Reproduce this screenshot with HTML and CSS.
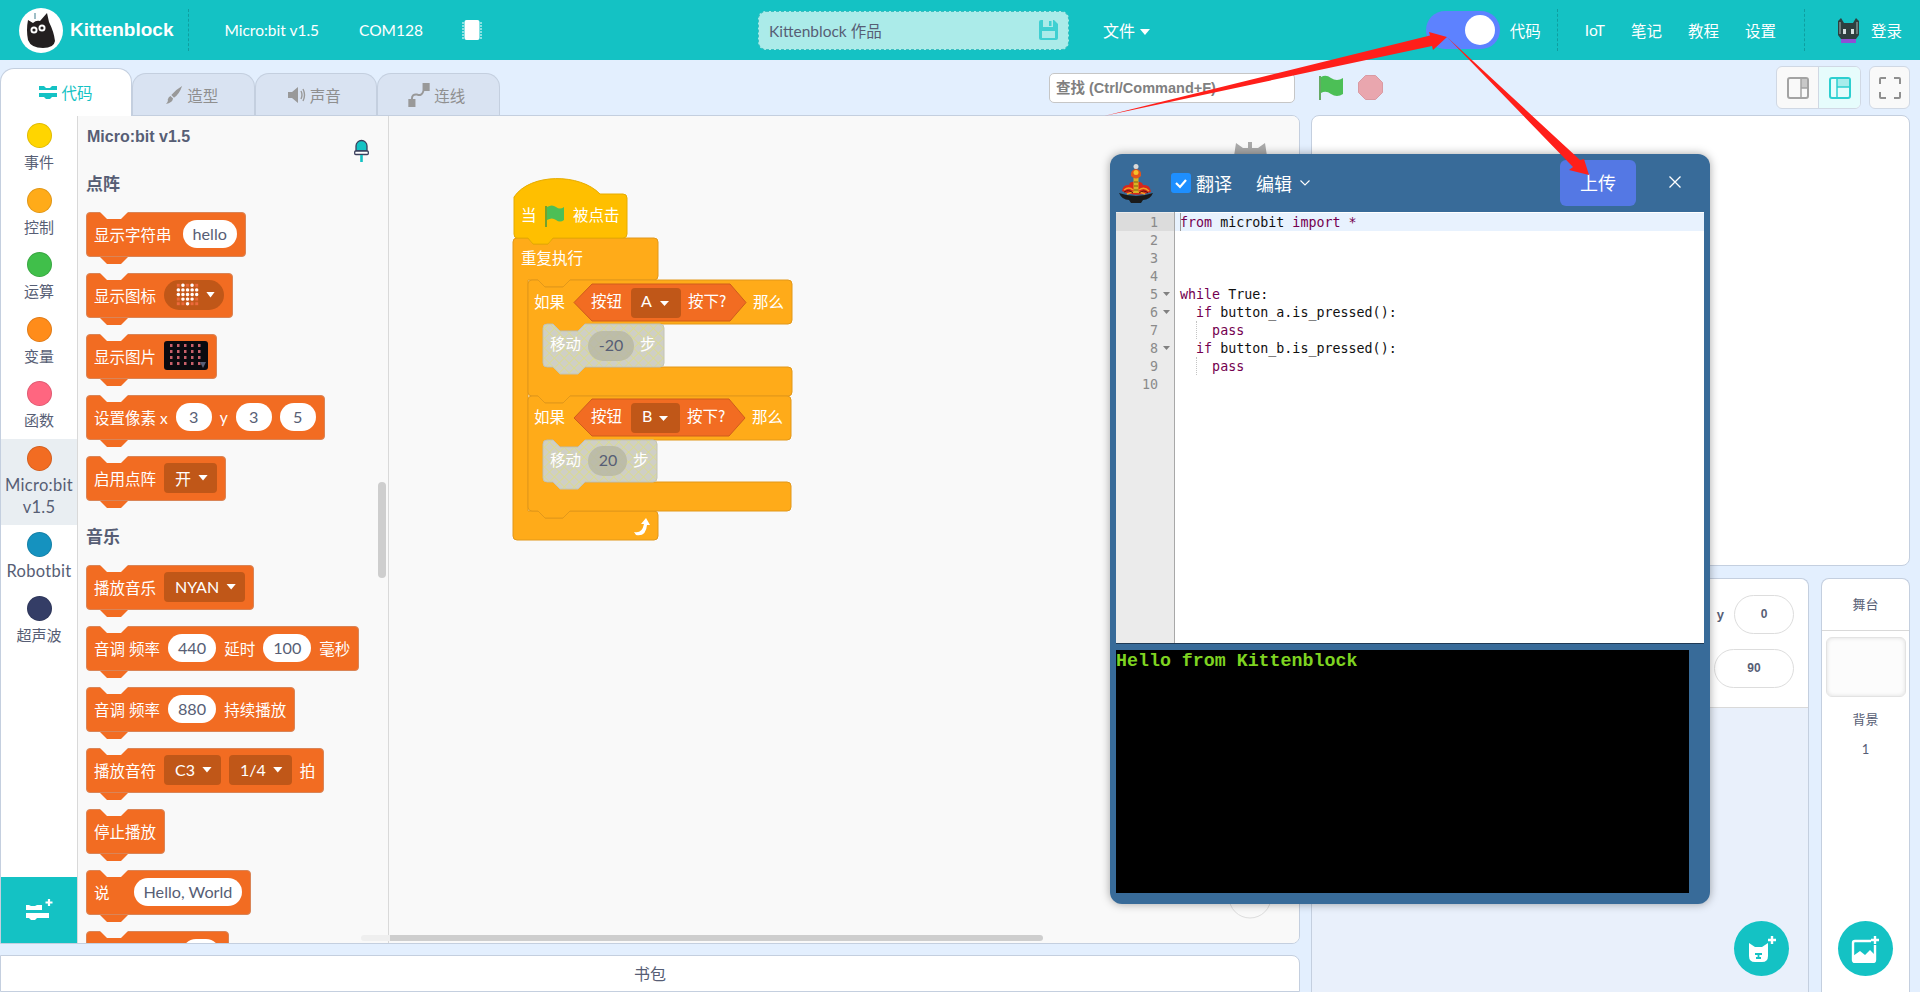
FILE: index.html
```
<!DOCTYPE html>
<html lang="zh-CN">
<head>
    <meta charset="UTF-8">
    <title>Kittenblock</title>
    <link rel="stylesheet" href="styles.css">
</head>
<body>
    <!-- 1. top bar -->
    <div class="topbar">
        <svg class="logo" viewBox="0 0 44 45">
            <ellipse cx="22" cy="22.5" rx="22" ry="22.5" fill="#fff"/>
            <path d="M9 12 L14 15 Q17 12 21 13 L28 5 L30 14 Q35 24 36 33 Q35 40 24 40 Q12 40 9 32 Q7 22 9 12Z" fill="#231f20"/>
            <circle cx="15" cy="22" r="3.5" fill="#fff"/><circle cx="23" cy="20" r="3.5" fill="#fff"/>
            <circle cx="15" cy="22" r="1.6" fill="#231f20"/><circle cx="23" cy="20" r="1.6" fill="#231f20"/>
            <path d="M16 5 V11" stroke="#7fa9b3" stroke-width="1.5"/>
        </svg>
        <span class="brand">Kittenblock</span>
        <span class="vline"></span>
        <span class="top-link device">Micro:bit v1.5</span>
        <span class="top-link com">COM128</span>
        <svg class="chip" viewBox="0 0 20 20">
            <rect x="2.5" y="0" width="15" height="20" rx="2" fill="#fff"/>
            <path d="M0 3H20M0 6H20M0 9H20M0 12H20M0 15H20M0 18H20" stroke="#fff" stroke-width="1.2" stroke-dasharray="2 16"/>
        </svg>
        <div class="project">
            <span>Kittenblock 作品</span>
            <svg class="save" viewBox="0 0 19 20">
                <path d="M2 0H15L19 4V18Q19 20 17 20H2Q0 20 0 18V2Q0 0 2 0Z" fill="#3fd0d2"/>
                <rect x="3" y="11" width="13" height="7" fill="#abebe9"/>
                <rect x="4" y="0" width="10" height="7" fill="#abebe9"/>
                <rect x="10" y="1" width="2.500" height="5" fill="#3fd0d2"/>
            </svg>
        </div>
        <span class="top-link file">文件<i class="caret"></i></span>
        <div class="top-right">
            <div class="switch"><span class="knob"></span></div>
            <span class="top-link code-label">代码</span>
            <span class="vline"></span>
            <span class="top-link iot">IoT</span>
            <span class="top-link">笔记</span>
            <span class="top-link">教程</span>
            <span class="top-link">设置</span>
            <span class="vline"></span>
            <svg class="user-cat" viewBox="0 0 23 25">
                <path d="M1 3 L4 0 L7 5 H16 L19 0 L22 3 V17 L19 21 H4 L1 17Z" fill="#2e3f3f"/>
                <path d="M3 4V16M20 4V16" stroke="#7d8f8f" stroke-width="1.500"/>
                <rect x="6" y="11" width="3" height="5" fill="#d5e0e0"/><rect x="14" y="11" width="3" height="5" fill="#d5e0e0"/>
                <rect x="4" y="21" width="15" height="4" fill="#8e4fd6"/>
            </svg>
            <span class="top-link">登录</span>
        </div>
    </div>

    <div class="main">
        <div class="left-col">
            <!-- 2. tabs and search -->
            <div class="tab-row">
                <div class="tab active">
                    <svg class="tab-icon" viewBox="0 0 18 14"><path d="M0 1H5L7 3H11L13 1H18V5H0ZM0 8H18V12H13L11 14H7L5 12H0Z" fill="#14c2c4"/></svg>
                    代码
                </div>
                <div class="tab">
                    <svg class="tab-icon" viewBox="0 0 18 20"><path d="M18 0 Q15 9 9 13 L6 10 Q11 4 18 0ZM5 11 L8 14 Q7 19 0 20 Q3 17 2 15 Q3 12 5 11Z" fill="#999"/></svg>
                    造型
                </div>
                <div class="tab">
                    <svg class="tab-icon" viewBox="0 0 18 16"><path d="M0 5H4L10 0V16L4 11H0Z" fill="#999"/><path d="M13 4 Q15 8 13 12M15 2 Q18 8 15 14" stroke="#999" fill="none" stroke-width="1.400"/></svg>
                    声音
                </div>
                <div class="tab">
                    <svg class="tab-icon wide" viewBox="0 0 24 27"><rect x="0" y="18" width="8" height="9" fill="#999"/><rect x="16" y="0" width="8" height="9" fill="#999"/><path d="M4 18 Q4 12 10 13 Q15 15 17 9" stroke="#999" stroke-width="2.200" fill="none"/></svg>
                    连线
                </div>
                <div class="search">查找 (Ctrl/Command+F)</div>
            </div>

            <!-- 3. block editor -->
            <div class="editor">
                <div class="cats">
                    <div class="cat"><span class="dot dot-event"></span><span class="cat-name">事件</span></div>
                    <div class="cat"><span class="dot dot-control"></span><span class="cat-name">控制</span></div>
                    <div class="cat"><span class="dot dot-operator"></span><span class="cat-name">运算</span></div>
                    <div class="cat"><span class="dot dot-variable"></span><span class="cat-name">变量</span></div>
                    <div class="cat"><span class="dot dot-function"></span><span class="cat-name">函数</span></div>
                    <div class="cat selected"><span class="dot dot-microbit"></span><span class="cat-name latin-name">Micro:bit v1.5</span></div>
                    <div class="cat"><span class="dot dot-robotbit"></span><span class="cat-name latin-name">Robotbit</span></div>
                    <div class="cat"><span class="dot dot-sonar"></span><span class="cat-name">超声波</span></div>
                    <div class="ext-button">
                        <svg viewBox="0 0 27 22" class="ext-icon"><path d="M0 6H3L5 7H9L11 6H16V11H0ZM0 14H23V19H11L9 21H5L3 19H0Z" fill="#fff"/><path d="M23 0V7M19.500 3.500H26.500" stroke="#fff" stroke-width="2.200"/></svg>
                    </div>
                </div>

                <div class="flyout">
                    <div class="fly-title">Micro:bit v1.5</div>
                    <svg class="led" viewBox="0 0 15 23">
                        <path d="M2 12V7A5.500 5.500 0 0 1 13 7V12Z" fill="#14c2c4" stroke="#3a3f5c" stroke-width="1.300"/>
                        <rect x="0.700" y="12" width="13.600" height="3.500" rx="1" fill="#fff" stroke="#3a3f5c" stroke-width="1.300"/>
                        <rect x="6.200" y="16" width="2.600" height="7" fill="#14c2c4"/>
                    </svg>
                    <div class="fly-head first">点阵</div>
                    <div class="block"><span class="b-text">显示字符串</span><span class="pill wide-gap">hello</span></div>
                    <div class="block">
                        <span class="b-text">显示图标</span>
                        <span class="matrix-drop">
                            <svg class="heart" viewBox="0 0 23 23">
                                <defs><pattern id="offdots" width="4.600" height="4.600" patternUnits="userSpaceOnUse"><rect x="0.800" y="0.800" width="3" height="3" fill="#ee6a3c"/></pattern></defs>
                                <rect width="23" height="23" fill="url(#offdots)"/>
                                <path d="M6.900 2.300H7M16 2.300H16.100M2.300 6.900H20.700M2.300 11.500H20.700M6.900 16.100H16.100M11.500 20.700H11.600" stroke="#fff" stroke-width="3.400" stroke-dasharray="0.100 4.500" stroke-linecap="round"/>
                            </svg>
                            <i class="caret"></i>
                        </span>
                    </div>
                    <div class="block">
                        <span class="b-text">显示图片</span>
                        <svg class="image-field" viewBox="0 0 44 29">
                            <defs><pattern id="reddots" x="6" y="3" width="7" height="6" patternUnits="userSpaceOnUse"><rect x="0" y="0" width="2.500" height="3" fill="#c8606a"/></pattern></defs>
                            <rect width="44" height="29" rx="3" fill="#0a0a0f"/>
                            <rect x="6" y="3" width="32" height="24" fill="url(#reddots)"/>
                            <path d="M36 21H42L39 27Z" fill="#575e75"/>
                        </svg>
                    </div>
                    <div class="block">
                        <span class="b-text">设置像素 x</span>
                        <span class="pill">3</span><span class="b-text">y</span><span class="pill">3</span><span class="pill">5</span>
                    </div>
                    <div class="block"><span class="b-text">启用点阵</span><span class="drop">开<i class="caret"></i></span></div>
                    <div class="fly-head">音乐</div>
                    <div class="block"><span class="b-text">播放音乐</span><span class="drop">NYAN<i class="caret"></i></span></div>
                    <div class="block"><span class="b-text">音调 频率</span><span class="pill">440</span><span class="b-text">延时</span><span class="pill">100</span><span class="b-text">毫秒</span></div>
                    <div class="block"><span class="b-text">音调 频率</span><span class="pill">880</span><span class="b-text">持续播放</span></div>
                    <div class="block"><span class="b-text">播放音符</span><span class="drop">C3<i class="caret"></i></span><span class="drop">1/4<i class="caret"></i></span><span class="b-text">拍</span></div>
                    <div class="block"><span class="b-text">停止播放</span></div>
                    <div class="block"><span class="b-text say">说</span><span class="pill">Hello, World</span></div>
                    <!-- next block, only its top edge is still in view -->
                    <div class="block"><span class="b-spacer"></span><span class="pill empty"></span></div>
                    <span class="fly-scroll"></span>
                </div>

                <div class="workspace">
                    <svg class="script" viewBox="389 115 911 829">
                        <defs>
                            <pattern id="hatch" width="7" height="7" patternUnits="userSpaceOnUse" patternTransform="rotate(45)">
                                <rect width="7" height="7" fill="#cfcfc6"/>
                                <path d="M0 0H7M0 0V7" stroke="#dcdc88" stroke-width="1.600"/>
                            </pattern>
                        </defs>
                        <!-- backdrop controls that sit behind the code window -->
                        <path class="ws-cat" d="M1234 155 L1236 142 L1243 147 H1248V141H1252V147H1258 L1265 142 L1267 155 Z"/>
                        <circle class="ws-zoom" cx="1250" cy="896" r="21"/>

                        <path class="c-shape" d="M517 237H528L533 243H548L553 237H654Q658 237 658 241V275Q658 279 654 279H570L563 286H545L538 279H528V510H538L545 517H563L570 510H654Q658 510 658 514V535Q658 539 654 539H517Q513 539 513 535V241Q513 237 517 237Z"/>
                        <path class="c-shape" d="M532 279H538L545 286H563L570 279H788Q792 279 792 283V319Q792 323 788 323H585L578 330H560L553 323H547Q543 323 543 327V362Q543 366 547 366H788Q792 366 792 370V391Q792 395 788 395H570L563 402H545L538 395H532Q528 395 528 391V283Q528 279 532 279Z"/>
                        <path class="c-shape" d="M532 395H538L545 402H563L570 395H787Q791 395 791 399V435Q791 439 787 439H585L578 446H560L553 439H547Q543 439 543 443V477Q543 481 547 481H787Q791 481 791 485V506Q791 510 787 510H570L563 517H545L538 510H532Q528 510 528 506V399Q528 395 532 395Z"/>
                        <path class="hat" d="M514 196C530 172 580 172 600 193H623Q627 193 627 197V233Q627 237 623 237H553L548 243H533L528 237H517Q514 237 514 233Z"/>

                        <text class="bt" x="521" y="220">当</text>
                        <path d="M546 205V226" stroke="#45993d" stroke-width="1.500"/>
                        <path d="M547 206Q552 203 556 206Q560 209 564 206V219Q560 222 556 219Q552 216 547 219Z" fill="#4cbf56"/>
                        <text class="bt" x="573" y="220">被点击</text>
                        <text class="bt" x="521" y="263">重复执行</text>

                        <text class="bt" x="534" y="307">如果</text>
                        <polygon class="hex" points="574,301.500 592,283 730,283 746,301.500 730,320 592,320"/>
                        <text class="bt" x="591" y="306">按钮</text>
                        <rect class="dd" x="631" y="287" width="50" height="30" rx="4"/>
                        <text class="bt latin" x="641" y="306">A</text>
                        <path class="cr" d="M660 300H669L664.500 305Z"/>
                        <text class="bt" x="688" y="306">按下?</text>
                        <text class="bt" x="753" y="307">那么</text>

                        <path class="ghost" d="M547 323H553L560 330H578L585 323H660Q664 323 664 327V362Q664 366 660 366H585L578 373H560L553 366H547Q543 366 543 362V327Q543 323 547 323Z"/>
                        <text class="bt" x="550" y="349">移动</text>
                        <rect class="ghost-oval" x="588" y="330" width="46" height="30" rx="15"/>
                        <text class="bt num" x="611" y="350">-20</text>
                        <text class="bt" x="640" y="349">步</text>

                        <text class="bt" x="534" y="422">如果</text>
                        <polygon class="hex" points="574,417 592,398 729,398 745,417 729,435 592,435"/>
                        <text class="bt" x="591" y="421">按钮</text>
                        <rect class="dd" x="631" y="402" width="49" height="30" rx="4"/>
                        <text class="bt latin" x="642" y="421">B</text>
                        <path class="cr" d="M659 415H668L663.500 420Z"/>
                        <text class="bt" x="687" y="421">按下?</text>
                        <text class="bt" x="752" y="422">那么</text>

                        <path class="ghost" d="M547 439H553L560 446H578L585 439H653Q657 439 657 443V477Q657 481 653 481H585L578 488H560L553 481H547Q543 481 543 477V443Q543 439 547 439Z"/>
                        <text class="bt" x="550" y="465">移动</text>
                        <rect class="ghost-oval" x="588" y="445" width="39" height="30" rx="15"/>
                        <text class="bt num" x="608" y="465">20</text>
                        <text class="bt" x="633" y="465">步</text>

                        <path d="M634 531Q642 533 644 523H641L646 517L650 524H647Q646 536 636 534Z" fill="#fff"/>
                    </svg>
                    <span class="ws-scroll"></span>
                </div>
            </div>

            <div class="backpack">书包</div>
        </div>

        <div class="right-col">
            <!-- 4. stage controls -->
            <div class="stage-tools">
                <svg class="flag" viewBox="0 0 25 25">
                    <path d="M1 1V25" stroke="#45993d" stroke-width="1.600"/>
                    <path d="M2 2Q7 -1 12 3Q18 7 24 3V19Q18 23 12 19Q7 15 2 18Z" fill="#4cbf56"/>
                </svg>
                <svg class="stop" viewBox="0 0 25 25">
                    <polygon points="7.500,0.500 17.500,0.500 24.500,7.500 24.500,17.500 17.500,24.500 7.500,24.500 0.500,17.500 0.500,7.500" fill="#e9a6ae" stroke="#d99aa3"/>
                </svg>
                <div class="view-group">
                    <span class="view-btn">
                        <svg class="view-icon" viewBox="0 0 22 22"><rect x="1" y="1" width="20" height="20" rx="2" fill="none" stroke="#a3a3a3" stroke-width="2"/><rect x="14" y="2" width="6" height="9" fill="#c8c8c8"/><path d="M14 1V21M14 11H21" stroke="#a3a3a3" stroke-width="1.500"/></svg>
                    </span>
                    <span class="view-btn on">
                        <svg class="view-icon" viewBox="0 0 22 22"><rect x="1" y="1" width="20" height="20" rx="2" fill="none" stroke="#2ccfd0" stroke-width="2"/><rect x="8" y="2" width="12" height="8" fill="#a8eceb"/><path d="M8 1V21M8 10H21" stroke="#2ccfd0" stroke-width="1.500"/></svg>
                    </span>
                </div>
                <span class="full-btn">
                    <svg class="view-icon" viewBox="0 0 22 22"><path d="M1 7V2Q1 1 2 1H7M15 1H20Q21 1 21 2V7M21 15V20Q21 21 20 21H15M7 21H2Q1 21 1 20V15" fill="none" stroke="#8f8f8f" stroke-width="2"/></svg>
                </span>
            </div>
            <div class="stage"></div>
            <div class="panes">
                <div class="sprite-pane">
                    <div class="sprite-info">
                        <div class="field-row"><span class="field-label">y</span><span class="field small">0</span></div>
                        <div class="field-row"><span class="field">90</span></div>
                    </div>
                    <span class="fab">
                        <svg class="fab-icon" viewBox="0 0 30 28"><path d="M2 8L8 12H15L21 8V21Q21 27 15 27H8Q2 27 2 21Z" fill="#fff"/><path d="M8 19H15M11.500 19V22M9 23H14" stroke="#14c2c4" stroke-width="1.800"/><path d="M25 1V9M21 5H29" stroke="#fff" stroke-width="2.400"/></svg>
                    </span>
                </div>
                <div class="stage-pane">
                    <div class="stage-title">舞台</div>
                    <div class="thumb"></div>
                    <div class="bg-label">背景</div>
                    <div class="bg-count">1</div>
                    <span class="fab">
                        <svg class="fab-icon" viewBox="0 0 30 28"><path d="M4 6H20M24 10V25Q24 27 22 27H4Q2 27 2 25V8Q2 6 4 6" fill="none" stroke="#fff" stroke-width="2.400"/><path d="M2 21L9 16L14 20L19 15L24 20V27H2Z" fill="#fff"/><path d="M24 1V9M20 5H28" stroke="#fff" stroke-width="2.400"/></svg>
                    </span>
                </div>
            </div>
        </div>
    </div>

    <!-- 5. code window -->
    <div class="code-window">
        <div class="cw-head">
            <svg class="py-logo" viewBox="0 0 36 40">
                <path d="M1 30Q18 36 35 30Q32 37 25 37L23 40H13L11 37Q4 37 1 30Z" fill="#1a1a1a"/>
                <path d="M4 28Q5 21 11 22Q12 18 17 19Q24 18 25 22Q32 21 33 29Q18 35 4 28Z" fill="#d8281c"/>
                <path d="M6 27Q11 23 15 27M21 27Q26 23 31 28M9 31Q18 27 27 31" stroke="#f0a020" stroke-width="1.500" fill="none"/>
                <path d="M6 29Q11 26 15 30M21 30Q26 26 30 30" stroke="#5a1408" stroke-width="1" fill="none"/>
                <path d="M15.500 30V15H20.500V30Z" fill="#d9b324"/>
                <path d="M16 19H20M16 23H20M16 27H20" stroke="#7a6010" stroke-width="1"/>
                <path d="M13 13Q12 7 18 6Q24 7 23 13Q18 18 13 13Z" fill="#e2541c"/>
                <circle cx="18" cy="9.500" r="2.500" fill="#f6c02c"/>
                <circle cx="18" cy="3.500" r="2.500" fill="#d9d9d9"/>
            </svg>
            <span class="check"><svg viewBox="0 0 20 20"><path d="M5 10L9 14L15 7" stroke="#fff" stroke-width="2.200" fill="none"/></svg></span>
            <span class="cw-label">翻译</span>
            <span class="cw-label edit">编辑</span>
            <svg class="chevron" viewBox="0 0 10 6"><path d="M0.500 0.500L5 5L9.500 0.500" stroke="#fff" fill="none" stroke-width="1.100"/></svg>
            <span class="upload">上传</span>
            <svg class="close" viewBox="0 0 12 12"><path d="M0.500 0.500L11.500 11.500M11.500 0.500L0.500 11.500" stroke="#fff" stroke-width="1.300"/></svg>
        </div>
        <div class="code-pane">
            <div class="gutter">
                <div class="ln current">1</div>
                <div class="ln">2</div>
                <div class="ln">3</div>
                <div class="ln">4</div>
                <div class="ln fold">5</div>
                <div class="ln fold">6</div>
                <div class="ln">7</div>
                <div class="ln fold">8</div>
                <div class="ln">9</div>
                <div class="ln">10</div>
            </div>
            <div class="code">
                <div class="cl current"><b>from</b> microbit <b>import</b> <b>*</b></div>
                <div class="cl"></div>
                <div class="cl"></div>
                <div class="cl"></div>
                <div class="cl"><b>while</b> True:</div>
                <div class="cl">  <b>if</b> button_a.is_pressed():</div>
                <div class="cl guide">    <b>pass</b></div>
                <div class="cl">  <b>if</b> button_b.is_pressed():</div>
                <div class="cl guide">    <b>pass</b></div>
                <div class="cl"></div>
            </div>
        </div>
        <div class="terminal">Hello from Kittenblock</div>
    </div>

    <!-- red arrows drawn over the screenshot -->
    <svg class="arrows" viewBox="0 0 1920 992">
        <polygon points="1104,116 1430,35.500 1429,32 1447,37 1433,50 1432,46"/>
        <polygon points="1447,37 1580,160 1584,159 1589,175 1569,170 1573,167"/>
    </svg>
</body>
</html>
```

FILE: styles.css
```
* {
    box-sizing: border-box;
}
body {
    margin: 0;
    width: 1920px;
    height: 992px;
    overflow: hidden;
    position: relative;
    background-color: #e3effe;
    color: #575e75;
    font-family: "Lato", "Noto Sans CJK SC", sans-serif;
    font-size: 15px;
}

/* top bar */
.topbar {
    height: 60px;
    background-color: #14c2c4;
    color: #fff;
    display: flex;
    align-items: center;
    padding-left: 19px;
}
.logo {
    width: 44px;
    height: 45px;
}
.brand {
    margin-left: 7px;
    font-family: "Liberation Sans", sans-serif;
    font-size: 19px;
    font-weight: bold;
}
.vline {
    width: 0;
    height: 42px;
    border-left: 1px dashed #0f9ea0;
    margin-left: 15px;
}
.top-link {
    color: #fff;
    font-size: 15.500px;
    white-space: nowrap;
}
.device {
    margin-left: 35px;
}
.com {
    margin-left: 40px;
}
.chip {
    margin-left: 39px;
    width: 20px;
    height: 20px;
}
.project {
    margin-left: 276px;
    width: 311px;
    height: 39px;
    background-color: #abebe9;
    border: 1px dashed #3cbfc0;
    border-radius: 8px;
    display: flex;
    align-items: center;
    justify-content: space-between;
    padding: 0 10px;
    color: #575e75;
    font-size: 15.500px;
}
.save {
    width: 19px;
    height: 20px;
}
.file {
    margin-left: 34px;
    font-size: 16px;
}
.caret {
    display: inline-block;
    width: 10px;
    height: 6px;
    margin-left: 5px;
    vertical-align: 2px;
    background-color: #fff;
    clip-path: polygon(0 0, 100% 0, 50% 100%);
}
.top-right {
    margin-left: auto;
    padding-right: 18px;
    display: flex;
    align-items: center;
}
.switch {
    width: 74px;
    height: 38px;
    border-radius: 19px;
    background-color: #5d82ff;
    display: flex;
    align-items: center;
    justify-content: flex-end;
    padding-right: 5px;
}
.knob {
    width: 30px;
    height: 30px;
    border-radius: 50%;
    background-color: #fff;
}
.code-label {
    margin-left: 10px;
}
.top-right .top-link + .top-link {
    margin-left: 26px;
}
.top-right .top-link + .vline {
    margin-left: 28px;
}
.top-right .code-label + .vline {
    margin-left: 16px;
}
.iot {
    margin-left: 27px;
}
.user-cat {
    width: 23px;
    height: 25px;
    margin-left: 32px;
    margin-right: 11px;
}

/* columns */
.main {
    display: flex;
    height: 932px;
}
.left-col {
    width: 1300px;
    display: flex;
    flex-direction: column;
}
.right-col {
    margin-left: 11px;
    width: 599px;
    display: flex;
    flex-direction: column;
}

/* tabs */
.tab-row {
    height: 55px;
    display: flex;
    align-items: flex-end;
}
.tab {
    width: 122.500px;
    height: 43px;
    margin-bottom: -1px;
    background-color: #d9e3f2;
    border: 1px solid #c4cfdf;
    border-bottom: none;
    border-radius: 14px 14px 0 0;
    display: flex;
    align-items: center;
    justify-content: center;
    gap: 4px;
    padding-right: 3px;
    color: #8f8f8f;
    font-size: 15.500px;
}
.tab.active {
    width: 132px;
    height: 48px;
    padding-right: 0;
    padding-bottom: 2px;
    background-color: #fff;
    color: #14c2c4;
    position: relative;
    z-index: 2;
}
.tab-icon {
    width: 18px;
    height: 18px;
}
.tab-icon.wide {
    width: 22px;
    height: 24px;
}
.search {
    margin: 0 5px 12px auto;
    width: 246px;
    height: 30px;
    background-color: #fff;
    border: 1px solid #c6c6c6;
    border-radius: 5px;
    padding-left: 6px;
    line-height: 28px;
    font-family: "Liberation Sans", "Noto Sans CJK SC", sans-serif;
    font-size: 14.500px;
    font-weight: bold;
    color: #808080;
}

/* block editor */
.editor {
    height: 829px;
    display: flex;
    border: 1px solid #c4cfdf;
    border-radius: 0 8px 8px 0;
    overflow: hidden;
    background-color: #f9f9f9;
}
.cats {
    width: 76px;
    background-color: #fff;
    display: flex;
    flex-direction: column;
    flex-shrink: 0;
}
.cat {
    padding: 7px 0;
    display: flex;
    flex-direction: column;
    align-items: center;
    min-height: 64.500px;
}
.cat.selected {
    background-color: #e9eef2;
}
.dot {
    width: 25px;
    height: 25px;
    border-radius: 50%;
    border: 1px solid rgba(0, 0, 0, 0.12);
    flex-shrink: 0;
}
.dot-event { background-color: #ffd500; }
.dot-control { background-color: #ffab19; }
.dot-operator { background-color: #40bf4a; }
.dot-variable { background-color: #ff8c1a; }
.dot-function { background-color: #ff6680; }
.dot-microbit { background-color: #f26c22; }
.dot-robotbit { background-color: #1592bf; }
.dot-sonar { background-color: #343d66; }
.cat-name {
    margin-top: 3px;
    font-size: 15px;
    line-height: 22px;
    text-align: center;
    width: 74px;
}
.latin-name {
    font-size: 16.500px;
    letter-spacing: 0.300px;
}
.ext-button {
    margin-top: auto;
    height: 66px;
    width: 77px;
    background-color: #14c2c4;
    display: flex;
    align-items: center;
    justify-content: center;
}
.ext-icon {
    width: 27px;
    height: 22px;
}

/* flyout */
.flyout {
    width: 312px;
    flex-shrink: 0;
    border-left: 1px solid #d9d9d9;
    border-right: 1px solid #d9d9d9;
    background-color: #f9f9f9;
    padding: 11px 0 0 8px;
    position: relative;
    overflow: hidden;
}
.fly-title {
    font-family: "Liberation Sans", sans-serif;
    font-size: 16px;
    font-weight: bold;
    line-height: 20px;
    margin-left: 1px;
}
.led {
    position: absolute;
    left: 276px;
    top: 23px;
    width: 15px;
    height: 23px;
}
.fly-head {
    font-family: "Noto Sans CJK SC", sans-serif;
    font-size: 17px;
    font-weight: bold;
    line-height: 22px;
    margin: 24px 0 18px;
}
.fly-head.first {
    margin: 25px 0 18px;
}
.block {
    display: flex;
    align-items: center;
    gap: 8px;
    width: fit-content;
    height: 45px;
    margin-bottom: 16px;
    padding: 0 8px 2px 7px;
    position: relative;
    background-color: #f26c22;
    border: 1px solid #d98558;
    border-radius: 4px;
    color: #fff;
    font-size: 15.500px;
}
.block::before {
    content: "";
    position: absolute;
    left: 13px;
    top: -1px;
    width: 28px;
    height: 7px;
    background-color: #f9f9f9;
    clip-path: polygon(0 0, 100% 0, 75% 100%, 25% 100%);
}
.block::after {
    content: "";
    position: absolute;
    left: 13px;
    bottom: -8px;
    width: 28px;
    height: 7px;
    background-color: #f26c22;
    clip-path: polygon(0 0, 100% 0, 75% 100%, 25% 100%);
}
.b-text {
    white-space: nowrap;
}
.b-spacer {
    width: 80px;
}
.say {
    margin-right: 16px;
}
.pill {
    min-width: 36px;
    height: 28px;
    border-radius: 14px;
    padding: 0 10px;
    background-color: #fff;
    color: #575e75;
    font-size: 16.200px;
    text-align: center;
    line-height: 28px;
    white-space: nowrap;
}
.pill.empty {
    width: 38px;
}
.wide-gap {
    margin-left: 3px;
}
.drop {
    height: 30px;
    padding: 0 9px 0 11px;
    background-color: #c05718;
    border-radius: 4px;
    display: flex;
    align-items: center;
    font-size: 16px;
    white-space: nowrap;
}
.drop .caret {
    margin-left: 7px;
    vertical-align: 0;
}
.matrix-drop {
    width: 60px;
    height: 30px;
    border-radius: 15px;
    background-color: #c05718;
    display: flex;
    align-items: center;
    padding-left: 12px;
}
.matrix-drop .caret {
    margin-left: 7px;
    width: 9px;
    vertical-align: 0;
}
.heart {
    width: 23px;
    height: 23px;
}
.image-field {
    width: 44px;
    height: 29px;
}
.fly-scroll {
    position: absolute;
    right: 2px;
    top: 366px;
    width: 8px;
    height: 96px;
    border-radius: 4px;
    background-color: #cecece;
}

/* workspace */
.workspace {
    flex-grow: 1;
    position: relative;
    background-color: #f9f9f9;
}
.script {
    position: absolute;
    left: 0;
    top: 0;
    width: 911px;
    height: 829px;
}
.ws-cat { fill: #aaa; }
.ws-zoom { fill: #f9f9f9; stroke: #ddd; }
.c-shape { fill: #ffab19; stroke: #e2981a; }
.hat { fill: #ffbf00; stroke: #e6ac00; }
.hex { fill: #f26c22; stroke: #cf5c1c; }
.dd { fill: #c05718; }
.cr { fill: #fff; }
.ghost { fill: url(#hatch); stroke: #c4c4b4; }
.ghost-oval { fill: #b6b6a2; fill-opacity: 0.8; }
.bt {
    fill: #fff;
    font-size: 15.500px;
    font-family: "Noto Sans CJK SC", sans-serif;
}
.bt.latin {
    font-family: "Lato", sans-serif;
    font-size: 16px;
}
.bt.num {
    fill: #575e75;
    font-family: "Lato", sans-serif;
    font-size: 16px;
    text-anchor: middle;
}
.ws-scroll {
    position: absolute;
    left: -28px;
    bottom: 2px;
    width: 682px;
    height: 6px;
    border-radius: 3px;
    background: linear-gradient(to right, #efefef 29px, #cecece 29px);
}

.backpack {
    margin-top: 11px;
    height: 37px;
    background-color: #fff;
    border: 1px solid #c4cfdf;
    border-radius: 0 8px 0 0;
    text-align: center;
    line-height: 35px;
    font-size: 16px;
}

/* stage */
.stage-tools {
    height: 55px;
    display: flex;
    align-items: flex-start;
    padding-left: 8px;
    position: relative;
}
.flag {
    width: 25px;
    height: 25px;
    margin-top: 15px;
}
.stop {
    width: 25px;
    height: 25px;
    margin-top: 15px;
    margin-left: 14px;
}
.view-group {
    margin-left: auto;
    margin-top: 6px;
    display: flex;
    width: 85px;
    height: 43px;
    border: 1px solid #d0d8e4;
    border-radius: 6px;
    overflow: hidden;
    background-color: #f9f9f9;
}
.view-btn {
    flex: 1;
    display: flex;
    align-items: center;
    justify-content: center;
}
.view-btn.on {
    background-color: #e6fcfc;
    border-left: 1px solid #d0d8e4;
}
.full-btn {
    margin-top: 6px;
    margin-left: 8px;
    width: 41px;
    height: 43px;
    border: 1px solid #d0d8e4;
    border-radius: 6px;
    background-color: #f9f9f9;
    display: flex;
    align-items: center;
    justify-content: center;
}
.view-icon {
    width: 22px;
    height: 22px;
}
.stage {
    height: 451px;
    background-color: #fff;
    border: 1px solid #c4cfdf;
    border-radius: 8px;
}
.panes {
    margin-top: 12px;
    height: 414px;
    display: flex;
    gap: 12px;
}
.sprite-pane {
    width: 498px;
    position: relative;
    background-color: #e9f0fb;
    border: 1px solid #c4cfdf;
    border-bottom: none;
    border-radius: 8px 8px 0 0;
}
.sprite-info {
    height: 129px;
    background-color: #fff;
    border-bottom: 1px solid #d9d9d9;
    border-radius: 8px 8px 0 0;
    padding: 16px 14px 0 0;
    display: flex;
    flex-direction: column;
    align-items: flex-end;
    gap: 15px;
}
.field-row {
    display: flex;
    align-items: center;
    gap: 10px;
}
.field-label,
.field {
    font-family: "Liberation Sans", sans-serif;
    font-size: 12px;
    font-weight: bold;
}
.field-label {
    font-size: 13px;
}
.field {
    width: 80px;
    height: 39px;
    border: 1px solid #dddddd;
    border-radius: 20px;
    text-align: center;
    line-height: 37px;
}
.field.small {
    width: 60px;
}
.stage-pane {
    width: 89px;
    position: relative;
    background-color: #fff;
    border: 1px solid #c4cfdf;
    border-bottom: none;
    border-radius: 8px 8px 0 0;
    text-align: center;
    font-size: 13px;
}
.stage-title {
    height: 52px;
    line-height: 50px;
    border-bottom: 1px solid #d9d9d9;
}
.thumb {
    margin: 6px auto 0;
    width: 80px;
    height: 60px;
    background-color: #fcfcfc;
    border: 1px solid #e3e3e3;
    border-radius: 6px;
    box-shadow: inset 0 0 4px rgba(0, 0, 0, 0.12);
}
.bg-label {
    margin-top: 12px;
    line-height: 20px;
}
.bg-count {
    margin-top: 10px;
    line-height: 20px;
}
.fab {
    position: absolute;
    bottom: 16px;
    width: 55px;
    height: 55px;
    border-radius: 50%;
    background-color: #14c2c4;
    display: flex;
    align-items: center;
    justify-content: center;
}
.sprite-pane .fab {
    right: 19px;
}
.stage-pane .fab {
    left: 16px;
}
.fab-icon {
    width: 30px;
    height: 28px;
}

/* code window */
.code-window {
    position: absolute;
    left: 1110px;
    top: 154px;
    width: 600px;
    height: 750px;
    background-color: #386b99;
    border-radius: 12px;
    box-shadow: 0 0 10px rgba(0, 0, 0, 0.35);
    padding: 0 6px;
    z-index: 10;
}
.cw-head {
    height: 58px;
    display: flex;
    align-items: center;
    color: #fff;
    position: relative;
    padding-bottom: 1px;
}
.py-logo {
    width: 36px;
    height: 40px;
    margin-left: 2px;
}
.check {
    width: 20px;
    height: 20px;
    margin-left: 17px;
    border-radius: 3px;
    background-color: #1e8fff;
}
.check svg {
    display: block;
}
.cw-label {
    margin-left: 5px;
    font-size: 18px;
}
.cw-label.edit {
    margin-left: 24px;
}
.chevron {
    width: 10px;
    height: 6px;
    margin-left: 8px;
}
.upload {
    position: absolute;
    left: 444px;
    top: 6px;
    width: 76px;
    height: 46px;
    background-color: #5478e4;
    border-radius: 6px;
    text-align: center;
    line-height: 46px;
    font-size: 18px;
}
.close {
    position: absolute;
    left: 553px;
    top: 22px;
    width: 12px;
    height: 12px;
}
.code-pane {
    height: 432px;
    display: flex;
    background-color: #fff;
    font-family: "DejaVu Sans Mono", monospace;
    font-size: 13.330px;
    line-height: 18px;
    padding-top: 1px;
    position: relative;
    border-bottom: 1px solid #1f3a55;
}
.gutter {
    width: 59px;
    height: 431px;
    margin-top: -1px;
    padding-top: 1px;
    background-color: #ebebeb;
    border-right: 1px solid #a8a8a8;
    color: #8a8a8a;
    flex-shrink: 0;
}
.ln {
    height: 18px;
    line-height: 19.500px;
    text-align: right;
    padding-right: 16px;
    position: relative;
}
.ln.current {
    background-color: #dcdcdc;
}
.ln.fold::after {
    content: "";
    position: absolute;
    right: 4px;
    top: 7px;
    width: 7px;
    height: 4px;
    background-color: #808080;
    clip-path: polygon(0 0, 100% 0, 50% 100%);
}
.code {
    flex-grow: 1;
}
.cl {
    height: 18px;
    line-height: 19.500px;
    padding-left: 5px;
    white-space: pre;
    color: #111;
    position: relative;
}
.cl.current {
    background-color: #e8f2fe;
}
.cl.current::before {
    content: "";
    position: absolute;
    left: 5px;
    top: 0;
    height: 18px;
    border-left: 1px solid #9a9a9a;
}
.cl.guide::before {
    content: "";
    position: absolute;
    left: 21px;
    top: 0;
    height: 18px;
    border-left: 1px dotted #c4c4c4;
}
.cl b {
    font-weight: normal;
    color: #74004f;
}
.terminal {
    margin-top: 6px;
    width: 573px;
    height: 243px;
    background-color: #000;
    color: #7ed321;
    font-family: "Liberation Mono", monospace;
    font-size: 18.300px;
    font-weight: bold;
    line-height: 22px;
}

/* annotation arrows */
.arrows {
    position: absolute;
    left: 0;
    top: 0;
    width: 1920px;
    height: 992px;
    z-index: 20;
    pointer-events: none;
    fill: #ff1f1a;
}
```
